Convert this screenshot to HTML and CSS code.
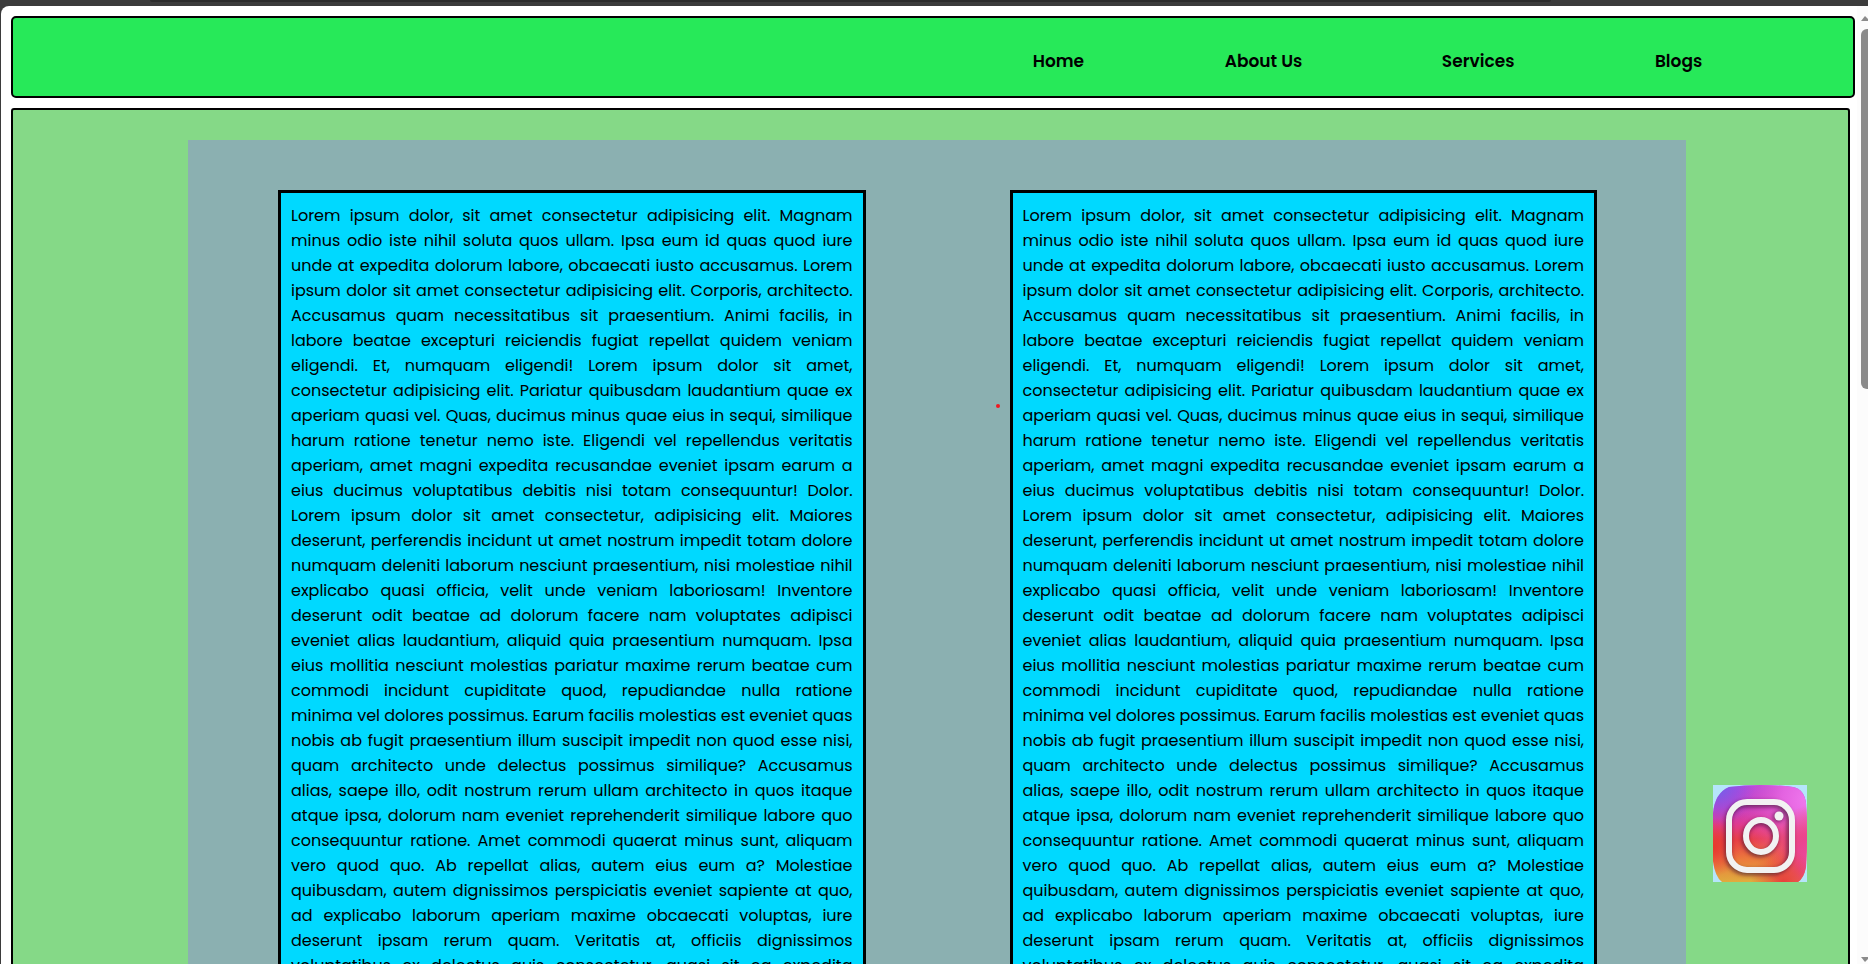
FILE: index.html
```html
<!DOCTYPE html>
<html lang="en">
<head>
<meta charset="utf-8">
<title>Home</title>
<link rel="stylesheet" href="styles.css">
</head>
<body>
<div class="tabstrip"></div>
<div class="window">
<div class="page">
<nav class="navbar">
<a href="#home">Home</a>
<a href="#about">About Us</a>
<a href="#services">Services</a>
<a href="#blogs">Blogs</a>
</nav>
<main class="content">
<div class="panel">
<article class="card"><p>Lorem ipsum dolor, sit amet consectetur adipisicing elit. Magnam<br>
minus odio iste nihil soluta quos ullam. Ipsa eum id quas quod iure<br>
unde at expedita dolorum labore, obcaecati iusto accusamus. Lorem<br>
ipsum dolor sit amet consectetur adipisicing elit. Corporis, architecto.<br>
Accusamus quam necessitatibus sit praesentium. Animi facilis, in<br>
labore beatae excepturi reiciendis fugiat repellat quidem veniam<br>
eligendi. Et, numquam eligendi! Lorem ipsum dolor sit amet,<br>
consectetur adipisicing elit. Pariatur quibusdam laudantium quae ex<br>
aperiam quasi vel. Quas, ducimus minus quae eius in sequi, similique<br>
harum ratione tenetur nemo iste. Eligendi vel repellendus veritatis<br>
aperiam, amet magni expedita recusandae eveniet ipsam earum a<br>
eius ducimus voluptatibus debitis nisi totam consequuntur! Dolor.<br>
Lorem ipsum dolor sit amet consectetur, adipisicing elit. Maiores<br>
deserunt, perferendis incidunt ut amet nostrum impedit totam dolore<br>
numquam deleniti laborum nesciunt praesentium, nisi molestiae nihil<br>
explicabo quasi officia, velit unde veniam laboriosam! Inventore<br>
deserunt odit beatae ad dolorum facere nam voluptates adipisci<br>
eveniet alias laudantium, aliquid quia praesentium numquam. Ipsa<br>
eius mollitia nesciunt molestias pariatur maxime rerum beatae cum<br>
commodi incidunt cupiditate quod, repudiandae nulla ratione<br>
minima vel dolores possimus. Earum facilis molestias est eveniet quas<br>
nobis ab fugit praesentium illum suscipit impedit non quod esse nisi,<br>
quam architecto unde delectus possimus similique? Accusamus<br>
alias, saepe illo, odit nostrum rerum ullam architecto in quos itaque<br>
atque ipsa, dolorum nam eveniet reprehenderit similique labore quo<br>
consequuntur ratione. Amet commodi quaerat minus sunt, aliquam<br>
vero quod quo. Ab repellat alias, autem eius eum a? Molestiae<br>
quibusdam, autem dignissimos perspiciatis eveniet sapiente at quo,<br>
ad explicabo laborum aperiam maxime obcaecati voluptas, iure<br>
deserunt ipsam rerum quam. Veritatis at, officiis dignissimos<br>
voluptatibus ex delectus quis consectetur, quasi sit ea expedita</p></article>
<article class="card"><p>Lorem ipsum dolor, sit amet consectetur adipisicing elit. Magnam<br>
minus odio iste nihil soluta quos ullam. Ipsa eum id quas quod iure<br>
unde at expedita dolorum labore, obcaecati iusto accusamus. Lorem<br>
ipsum dolor sit amet consectetur adipisicing elit. Corporis, architecto.<br>
Accusamus quam necessitatibus sit praesentium. Animi facilis, in<br>
labore beatae excepturi reiciendis fugiat repellat quidem veniam<br>
eligendi. Et, numquam eligendi! Lorem ipsum dolor sit amet,<br>
consectetur adipisicing elit. Pariatur quibusdam laudantium quae ex<br>
aperiam quasi vel. Quas, ducimus minus quae eius in sequi, similique<br>
harum ratione tenetur nemo iste. Eligendi vel repellendus veritatis<br>
aperiam, amet magni expedita recusandae eveniet ipsam earum a<br>
eius ducimus voluptatibus debitis nisi totam consequuntur! Dolor.<br>
Lorem ipsum dolor sit amet consectetur, adipisicing elit. Maiores<br>
deserunt, perferendis incidunt ut amet nostrum impedit totam dolore<br>
numquam deleniti laborum nesciunt praesentium, nisi molestiae nihil<br>
explicabo quasi officia, velit unde veniam laboriosam! Inventore<br>
deserunt odit beatae ad dolorum facere nam voluptates adipisci<br>
eveniet alias laudantium, aliquid quia praesentium numquam. Ipsa<br>
eius mollitia nesciunt molestias pariatur maxime rerum beatae cum<br>
commodi incidunt cupiditate quod, repudiandae nulla ratione<br>
minima vel dolores possimus. Earum facilis molestias est eveniet quas<br>
nobis ab fugit praesentium illum suscipit impedit non quod esse nisi,<br>
quam architecto unde delectus possimus similique? Accusamus<br>
alias, saepe illo, odit nostrum rerum ullam architecto in quos itaque<br>
atque ipsa, dolorum nam eveniet reprehenderit similique labore quo<br>
consequuntur ratione. Amet commodi quaerat minus sunt, aliquam<br>
vero quod quo. Ab repellat alias, autem eius eum a? Molestiae<br>
quibusdam, autem dignissimos perspiciatis eveniet sapiente at quo,<br>
ad explicabo laborum aperiam maxime obcaecati voluptas, iure<br>
deserunt ipsam rerum quam. Veritatis at, officiis dignissimos<br>
voluptatibus ex delectus quis consectetur, quasi sit ea expedita</p></article>
</div>
</main>
</div>
<div class="scrollbar" aria-hidden="true">
<svg class="arrow" viewBox="0 0 7 5"><path d="M0 5L4 0L7 3V5Z"/></svg>
<div class="thumb"></div>
<svg class="arrow arrow-down" viewBox="0 0 7 5"><path d="M0 0H7V2L4 5Z"/></svg>
</div>
<span class="pointer-dot"></span>
<a class="instagram" href="#instagram" aria-label="Instagram">
<svg viewBox="0 0 94 97">
<defs>
<linearGradient id="base" x1="0.35" y1="0" x2="0.4" y2="1">
<stop offset="0" stop-color="#a94be6"/><stop offset=".22" stop-color="#c040c8"/><stop offset=".4" stop-color="#df3a90"/><stop offset=".56" stop-color="#e83f48"/><stop offset=".76" stop-color="#ec7a3c"/><stop offset="1" stop-color="#dfae3e"/>
</linearGradient>
<radialGradient id="pink" cx="1" cy=".15" r=".75">
<stop offset="0" stop-color="#ef78ee"/><stop offset=".35" stop-color="#e967e2" stop-opacity=".9"/><stop offset="1" stop-color="#e84ab0" stop-opacity="0"/>
</radialGradient>
<radialGradient id="rose" cx="1.1" cy=".75" r=".55">
<stop offset="0" stop-color="#ec4aa8"/><stop offset=".4" stop-color="#ea4290" stop-opacity=".9"/><stop offset="1" stop-color="#f04540" stop-opacity="0"/>
</radialGradient>
<radialGradient id="scarlet" cx=".75" cy="1" r=".35">
<stop offset="0" stop-color="#e8403c"/><stop offset="1" stop-color="#e8403c" stop-opacity="0"/>
</radialGradient>
<radialGradient id="violet" cx=".05" cy=".02" r=".4">
<stop offset="0" stop-color="#6c62ea"/><stop offset="1" stop-color="#9a4ce0" stop-opacity="0"/>
</radialGradient>
<radialGradient id="red" cx="0" cy=".64" r=".3">
<stop offset="0" stop-color="#e8392c"/><stop offset="1" stop-color="#e83d3c" stop-opacity="0"/>
</radialGradient>
<filter id="soft" x="-20%" y="-20%" width="140%" height="140%"><feGaussianBlur stdDeviation="2"/></filter>
<clipPath id="tile"><path d="M16 2Q47-2 80 2Q91 4 93 18Q95 48 93 82Q91 93 85 97H9Q2 92 0 76V28Q2 8 16 2Z"/></clipPath>
</defs>
<rect width="94" height="97" fill="#b5e5fb"/>
<g clip-path="url(#tile)">
<rect width="94" height="97" fill="url(#base)"/>
<rect width="94" height="97" fill="url(#red)"/>
<rect width="94" height="97" fill="url(#pink)"/>
<rect width="94" height="97" fill="url(#rose)"/>
<rect width="94" height="97" fill="url(#scarlet)"/>
<rect width="94" height="97" fill="url(#violet)"/>
</g>
<g fill="none" stroke="#40102c" stroke-opacity=".7" stroke-width="6" filter="url(#soft)">
<rect x="15" y="19" width="62" height="68" rx="18"/><ellipse cx="47" cy="53" rx="15" ry="16"/><circle cx="65" cy="32" r="2"/>
</g>
<g fill="none" stroke="#f2f2f2" stroke-width="6">
<rect x="16" y="17" width="63" height="68" rx="18"/><ellipse cx="48" cy="51" rx="15" ry="16"/>
</g>
<circle cx="66" cy="31" r="4.500" fill="#f2f2f2"/>
</svg>
</a>
</div>
</body>
</html>
```
FILE: styles.css
```css
* {
  box-sizing: border-box;
}

body {
  margin: 0;
  height: 100vh;
  overflow: hidden;
  display: flex;
  flex-direction: column;
  padding-left: 1px;
  background: #3b3b3b;
  color: #000;
  font-family: Poppins, Inter, sans-serif;
  font-size: 16px;
  line-height: 25px;
}

.tabstrip {
  flex: none;
  height: 6px;
  padding: 0 17% 0 8%;
}

.tabstrip::before {
  content: "";
  display: block;
  height: 2px;
  border-radius: 0 0 4px 4px;
  background: #2b2b2b;
}

.window {
  position: relative;
  flex: 1;
  min-height: 0;
  display: flex;
  overflow: hidden;
  background: #fff;
  border-top-left-radius: 8px;
}

.page {
  flex: 1;
  padding: 10px 2px 0 10px;
}

.navbar {
  display: grid;
  grid-template-columns: 192fr 217fr 213fr 198fr;
  align-items: center;
  height: 82px;
  padding: 8px 0 0 55.3%;
  border: 2px solid #000;
  border-radius: 5px;
  background: #27e959;
}

.navbar a {
  color: inherit;
  font-size: 17px;
  font-weight: 600;
  text-decoration: none;
}

.content {
  display: grid;
  grid-template-columns: 1fr;
  margin: 10px 5px 10px 0;
  padding: 30px 162px 30px 175px;
  border: 2px solid #000;
  border-radius: 3px;
  background: #85d987;
}

.panel {
  display: grid;
  grid-template-columns: 1fr 1fr;
  column-gap: 144px;
  padding: 50px 89px 50px 90px;
  background: #8bb0b1;
}

.card {
  padding: 10px;
  border: 3px solid #000;
  background: #00d9ff;
}

.card p {
  margin: 0;
  text-align: justify;
  text-align-last: justify;
}

.scrollbar {
  flex: none;
  width: 11px;
  padding: 10px 0 2px 4px;
  display: flex;
  flex-direction: column;
  overflow: hidden;
  background: #fcfcfc;
}

.arrow {
  flex: none;
  width: 7px;
  height: 5px;
  fill: #8b8b8b;
}

.arrow-down {
  margin-top: auto;
}

.thumb {
  flex: none;
  width: 12px;
  height: 360px;
  margin-top: 8px;
  border-radius: 6px;
  background: #8b8b8b;
}

.pointer-dot {
  position: absolute;
  left: 995px;
  top: 398px;
  width: 4px;
  height: 4px;
  border-radius: 50%;
  background: #f01820;
}

.instagram {
  position: absolute;
  right: 61px;
  bottom: 82px;
  width: 94px;
  height: 97px;
}

.instagram svg {
  display: block;
}
```
